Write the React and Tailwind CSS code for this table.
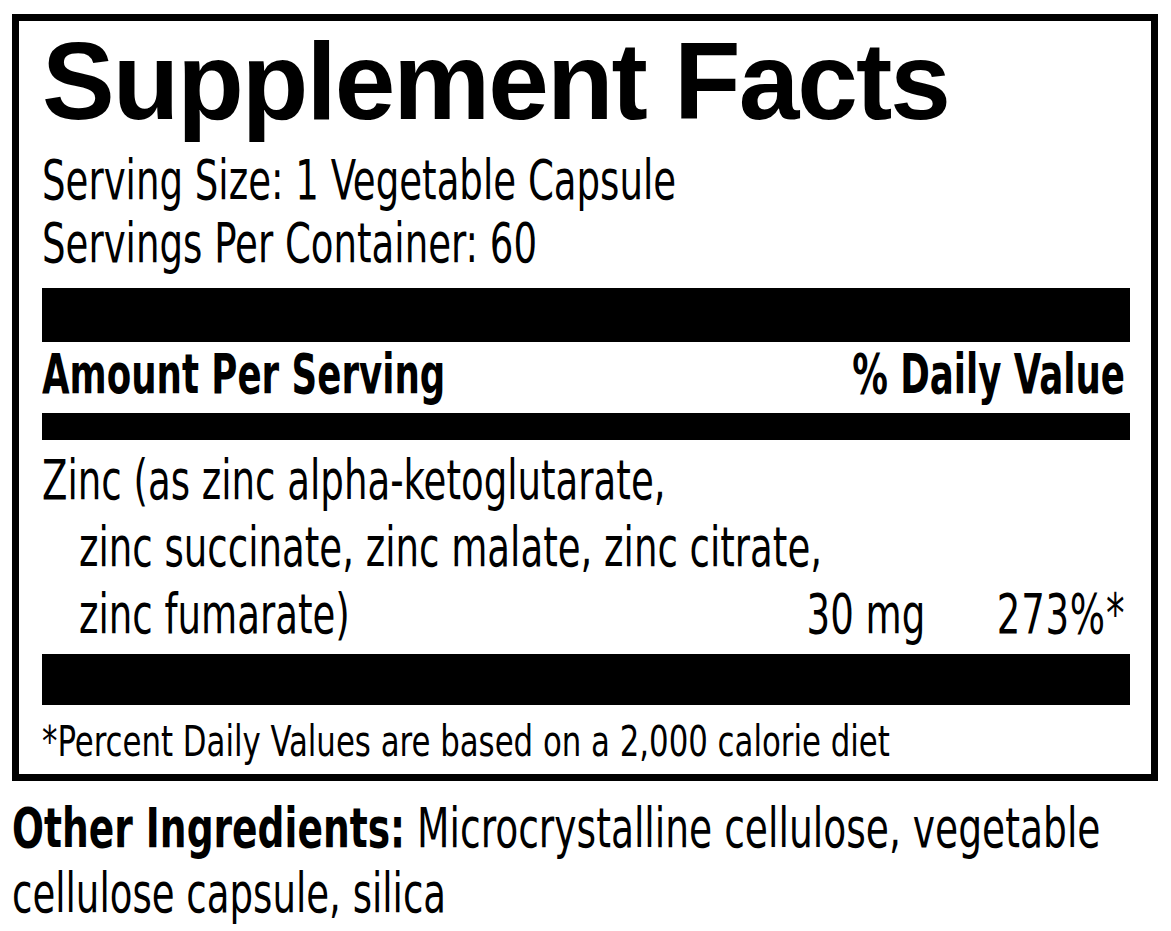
const body = { fontFamily: '"DejaVu Sans Condensed", "DejaVu Sans", sans-serif' }
const title = { fontFamily: '"Liberation Sans", Arial, sans-serif' }

// Condensed label type: DejaVu Condensed squeezed to the width of the printed face
function Line({ children, className = '', origin = 'origin-left', bold = false }) {
  return (
    <span
      className={`inline-block whitespace-nowrap ${origin} ${bold ? 'font-bold scale-x-[0.72]' : 'scale-x-[0.75]'} ${className}`}
    >
      {children}
    </span>
  )
}

export default function App() {
  return (
    <div className="w-[1171px] h-[931px] overflow-hidden bg-white text-black pt-[14px] pl-[12px]" style={body}>
      <div className="w-[1146px] border-[7px] border-black pl-[23px] pr-[21px] pb-[7px]">
        <h1 className="text-[109px] leading-[120px] font-bold tracking-[-2px]" style={title}>
          Supplement Facts
        </h1>

        <div className="mt-[8px] text-[55px] leading-[63px]">
          <p><Line>Serving Size: 1 Vegetable Capsule</Line></p>
          <p><Line>Servings Per Container: 60</Line></p>
        </div>

        <div className="mt-[13px] h-[54px] bg-black" />

        <div className="flex justify-between text-[55px] leading-[64px] pb-[7px] pr-[5px]">
          <Line bold>Amount Per Serving</Line>
          <Line bold origin="origin-right">% Daily Value</Line>
        </div>

        <div className="h-[27px] bg-black" />

        <div className="flex items-end text-[55px] leading-[67px] pt-[7px] pb-[6px] pr-[5px]">
          <div className="flex-1 min-w-0">
            <p><Line>Zinc (as zinc alpha-ketoglutarate,</Line></p>
            <p className="pl-[37px]"><Line>zinc succinate, zinc malate, zinc citrate,</Line></p>
            <p className="pl-[37px]"><Line>zinc fumarate)</Line></p>
          </div>
          <div className="shrink-0 text-right">
            <Line origin="origin-right">30 mg</Line>
          </div>
          <div className="w-[200px] shrink-0 text-right">
            <Line origin="origin-right" className="tracking-[1px]">273%*</Line>
          </div>
        </div>

        <div className="h-[51px] bg-black" />

        <p className="pt-[12px] text-[42px] leading-[50px]">
          <span className="inline-block whitespace-nowrap origin-left scale-x-[0.815]">
            *Percent Daily Values are based on a 2,000 calorie diet
          </span>
        </p>
      </div>

      <div className="mt-[15px] text-[55px] leading-[65px]">
        <p>
          <span className="inline-block whitespace-nowrap origin-left scale-x-[0.76]">
            <span className="font-bold">Other Ingredients:</span> Microcrystalline cellulose, vegetable
          </span>
        </p>
        <p><Line>cellulose capsule, silica</Line></p>
      </div>
    </div>
  )
}
